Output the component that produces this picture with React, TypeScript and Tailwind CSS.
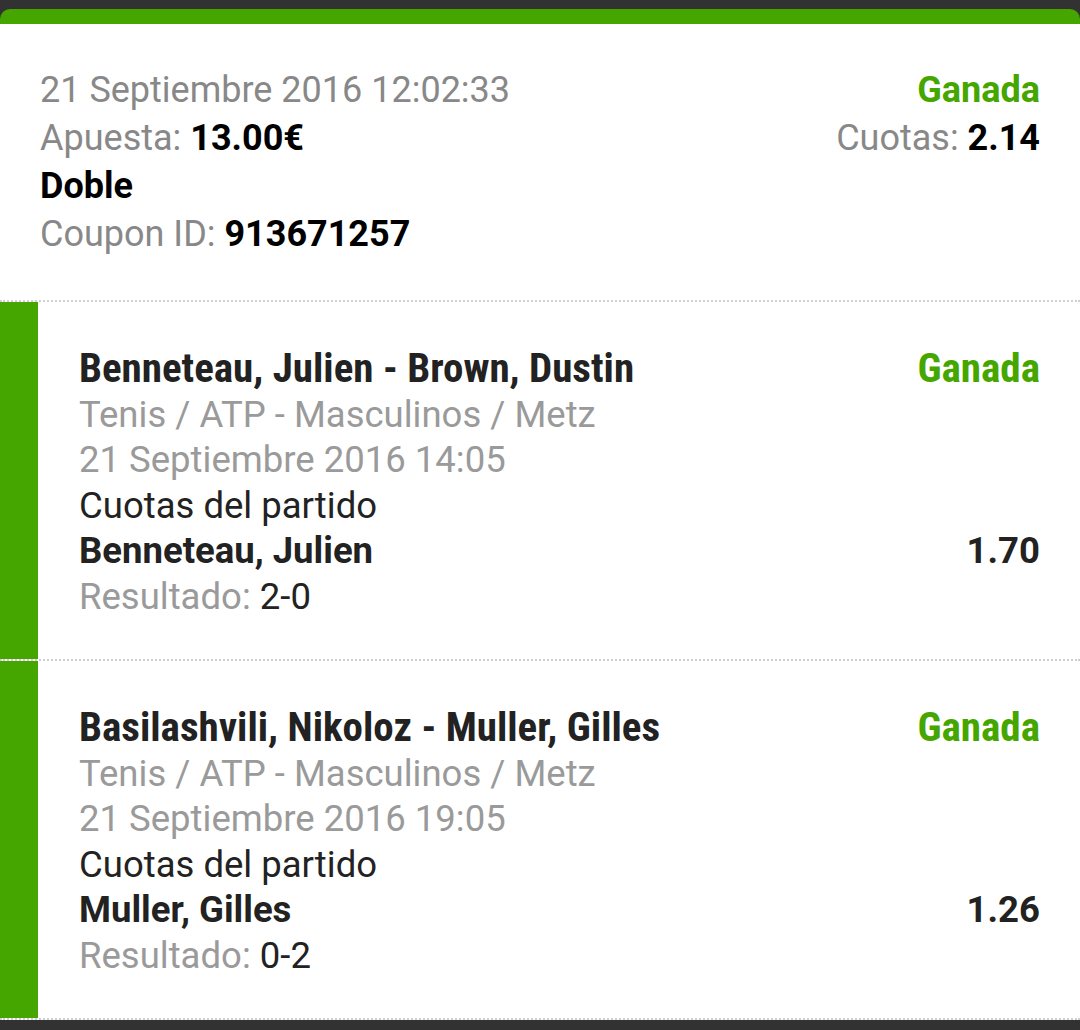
import React from "react";

const bets = [
  {
    match: "Benneteau, Julien - Brown, Dustin",
    league: "Tenis / ATP - Masculinos / Metz",
    date: "21 Septiembre 2016 14:05",
    market: "Cuotas del partido",
    pick: "Benneteau, Julien",
    odds: "1.70",
    result: "2-0",
  },
  {
    match: "Basilashvili, Nikoloz - Muller, Gilles",
    league: "Tenis / ATP - Masculinos / Metz",
    date: "21 Septiembre 2016 19:05",
    market: "Cuotas del partido",
    pick: "Muller, Gilles",
    odds: "1.26",
    result: "0-2",
  },
];

const Separator = () => <div className="border-t-2 border-dotted border-[#cfcfcf]" />;

const BetRow = ({ bet }: { bet: (typeof bets)[number] }) => (
  <div className="flex bg-white">
    <div className="w-[38px] shrink-0 bg-[#45a600]" />
    <div className="flex-1 pl-[41px] pr-10 pt-[44px] pb-[40px] text-[36.5px] leading-[45.5px]">
      <div className="flex justify-between text-[41px] font-bold [font-stretch:condensed]">
        <span className="text-[#222]">{bet.match}</span>
        <span className="text-[#45a600]">Ganada</span>
      </div>
      <div className="text-[#9a9a9a]">{bet.league}</div>
      <div className="text-[#9a9a9a]">{bet.date}</div>
      <div className="text-[#222]">{bet.market}</div>
      <div className="flex justify-between font-bold text-[#222]">
        <span>{bet.pick}</span>
        <span>{bet.odds}</span>
      </div>
      <div>
        <span className="text-[#9a9a9a]">Resultado: </span>
        <span className="text-[#222]">{bet.result}</span>
      </div>
    </div>
  </div>
);

export default function App() {
  return (
    <div className="min-h-[1030px] bg-[#323232] pt-[9px] pb-[10px] font-['Roboto',sans-serif]">
      <div className="h-[15px] rounded-t-[10px] bg-[#45a600]" />
      <div className="bg-white">
        <div className="flex justify-between px-10 pt-[42px] pb-[42px] text-[36px] leading-[48px]">
          <div>
            <div className="text-[#888]">21 Septiembre 2016 12:02:33</div>
            <div>
              <span className="text-[#888]">Apuesta: </span>
              <span className="font-bold text-black">13.00€</span>
            </div>
            <div className="font-bold text-black">Doble</div>
            <div>
              <span className="text-[#888]">Coupon ID: </span>
              <span className="font-bold text-black">913671257</span>
            </div>
          </div>
          <div className="text-right">
            <div className="font-bold text-[#45a600]">Ganada</div>
            <div>
              <span className="text-[#888]">Cuotas: </span>
              <span className="font-bold text-black">2.14</span>
            </div>
          </div>
        </div>
        <Separator />
        {bets.map((bet, i) => (
          <React.Fragment key={bet.match}>
            {i > 0 && <Separator />}
            <BetRow bet={bet} />
          </React.Fragment>
        ))}
        <Separator />
      </div>
    </div>
  );
}
